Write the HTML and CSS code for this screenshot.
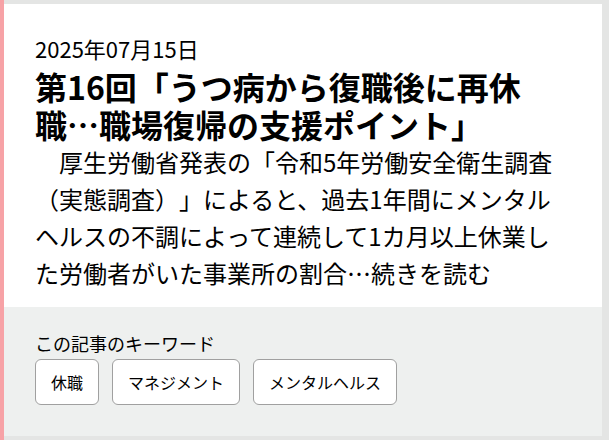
FILE: index.html
```html
<!DOCTYPE html>
<html lang="ja">
<head>
    <meta charset="UTF-8">
    <meta name="viewport" content="width=device-width, initial-scale=1.0">
    <title>第16回「うつ病から復職後に再休職…職場復帰の支援ポイント」</title>
    <link rel="stylesheet" href="styles.css">
</head>
<body>

    <div class="entry">
        <div class="entry-card">
            <div class="entry-body">
                <div class="entry-date">2025年07月15日</div>
                <h1 class="entry-title">第16回「うつ病から復職後に再休職…職場復帰の支援ポイント」</h1>
                <p class="entry-lead">　厚生労働省発表の「令和5年労働安全衛生調査（実態調査）」によると、過去1年間にメンタルヘルスの不調によって連続して1カ月以上休業した労働者がいた事業所の割合…続きを読む</p>
            </div>
            <div class="entry-keywords">
                <div class="keywords-label">この記事のキーワード</div>
                <div class="keywords-list">
                    <a class="keyword" href="#">休職</a>
                    <a class="keyword" href="#">マネジメント</a>
                    <a class="keyword" href="#">メンタルヘルス</a>
                </div>
            </div>
        </div>
    </div>

</body>
</html>
```

FILE: styles.css
```css
body {
    font-family: "Noto Sans CJK JP", "Noto Sans", sans-serif;
    background-color: #e4e5e4;
    color: #000000;
    margin: 0;
    text-spacing-trim: space-all;
}
.entry {
    border-left: 4px solid #f7a2a6;
    padding: 4px 7px 4px 0;
    height: 440px;
    box-sizing: border-box;
}
.entry-card {
    background-color: #ffffff;
    height: 100%;
    display: flex;
    flex-direction: column;
}
.entry-body {
    padding: 30px 48px 16px 31px;
}
.entry-date {
    font-size: 22px;
    line-height: 28px;
}
.entry-title {
    font-size: 32px;
    line-height: 38px;
    font-weight: bold;
    margin: 5px 0 0 0;
}
.entry-lead {
    font-size: 24px;
    line-height: 37px;
    margin: 0;
}
.entry-keywords {
    flex: 1;
    background-color: #eef0ef;
    padding: 23px 31px 0 31px;
}
.keywords-label {
    font-size: 18px;
    line-height: 27px;
    margin-bottom: 2px;
}
.keywords-list {
    display: flex;
    gap: 13px;
}
.keyword {
    display: block;
    font-size: 16px;
    line-height: 44px;
    padding: 0 15px;
    color: #000000;
    text-decoration: none;
    background-color: #ffffff;
    border: 1px solid #a0a0a0;
    border-radius: 6px;
}
```
